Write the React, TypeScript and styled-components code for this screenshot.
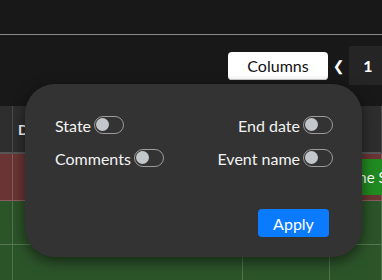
import React, { useState } from 'react'
import styled, { createGlobalStyle } from 'styled-components'

const GlobalStyle = createGlobalStyle`
  html, body {
    margin: 0;
    padding: 0;
    background: #181818;
    overflow: hidden;
    font-family: Lato, "Open Sans", sans-serif;
  }
`

const columns = [
  { key: 'state', label: 'State', side: 'left' },
  { key: 'endDate', label: 'End date', side: 'right' },
  { key: 'comments', label: 'Comments', side: 'left' },
  { key: 'eventName', label: 'Event name', side: 'right' },
]

const App = () => {
  // which columns are switched on
  const [shown, setShown] = useState<Record<string, boolean>>({})

  const flip = (key: string) => {
    setShown({ ...shown, [key]: !shown[key] })
  }

  return (
    <Page>
      <GlobalStyle />
      <TopBar />
      <Main>
        <Toolbar>
          <ColumnsButton>Columns</ColumnsButton>
          <Chevron>❮</Chevron>
          <PageBox>1</PageBox>
        </Toolbar>

        <Table>
          <HeadCell />
          <HeadCell>Date</HeadCell>
          <HeadCell />
          <HeadCell />

          <Cell tone="red" />
          <Cell tone="red" />
          <Cell tone="red" />
          <Cell tone="red">
            <Badge>Game Show</Badge>
          </Cell>

          <Cell tone="green" />
          <Cell tone="green" />
          <Cell tone="green" />
          <Cell tone="green" />

          <Cell tone="green" />
          <Cell tone="green" />
          <Cell tone="green" />
          <Cell tone="green" />
        </Table>

        {/* column chooser menu */}
        <Popup>
          <Options>
            {columns.map((c) => (
              <Option key={c.key} side={c.side}>
                {c.label}
                <Toggle on={!!shown[c.key]} onClick={() => flip(c.key)} />
              </Option>
            ))}
          </Options>
          <Footer>
            <ApplyButton>Apply</ApplyButton>
          </Footer>
        </Popup>
      </Main>
    </Page>
  )
}

export default App

const Page = styled.div`
  width: 382px;
  height: 280px;
  background: #181818;
  overflow: hidden;
`
const TopBar = styled.div`
  height: 34px;
  border-bottom: 1px solid #8a8a8a;
`
const Main = styled.div`
  position: relative;
`
const Toolbar = styled.div`
  display: flex;
  align-items: center;
  justify-content: flex-end;
  padding-top: 11px;
  margin-bottom: 21px;
  margin-right: -5px;
`
const ColumnsButton = styled.button`
  width: 100px;
  height: 28px;
  background: #ffffff;
  color: #111;
  border: none;
  border-radius: 4px;
  box-shadow: inset 0 -1px 0 #cfcfcf;
  font-family: Lato, sans-serif;
  font-size: 16px;
  padding: 0;
`
const Chevron = styled.span`
  width: 21px;
  text-align: center;
  color: #ffffff;
  font-family: "DejaVu Sans", sans-serif;
  font-size: 14px;
  font-weight: bold;
`
const PageBox = styled.div`
  width: 38px;
  height: 39px;
  background: #252525;
  color: #ffffff;
  font-weight: bold;
  font-size: 16px;
  display: flex;
  align-items: center;
  justify-content: center;
`
const Table = styled.div`
  display: grid;
  grid-template-columns: 13px 230px 87px 1fr;
  grid-template-rows: 48px 47px 44px 44px;
`
const HeadCell = styled.div`
  background: #2e2e2e;
  border-right: 1px solid #4a4a4a;
  border-bottom: 2px solid #555555;
  color: #ffffff;
  font-size: 14px;
  font-weight: bold;
  display: flex;
  align-items: center;
  padding-left: 5px;
  box-sizing: border-box;
`
const Cell = styled.div<{ tone: string }>`
  background: ${(p) => (p.tone === 'red' ? '#6b3434' : '#2c5429')};
  border-right: 1px solid rgba(255, 255, 255, 0.18);
  border-bottom: 1px solid rgba(255, 255, 255, 0.2);
  box-sizing: border-box;
  padding: 5px 0 5px 0;
  display: flex;
  min-width: 0;
`
const Badge = styled.div`
  flex: 1;
  background: #218a21;
  color: #ffffff;
  font-size: 15px;
  display: flex;
  align-items: center;
  padding-left: 6px;
  white-space: nowrap;
`
const Popup = styled.div`
  position: absolute;
  left: 25px;
  top: 49px;
  width: 337px;
  height: 173px;
  box-sizing: border-box;
  padding: 32px 29px 20px 30px;
  background: #333333;
  border-radius: 30px;
  box-shadow: 0 4px 14px rgba(0, 0, 0, 0.55);
  display: flex;
  flex-direction: column;
  justify-content: space-between;
`
const Options = styled.div`
  display: grid;
  grid-template-columns: 1fr 1fr;
  row-gap: 15px;
`
const Option = styled.label<{ side: string }>`
  justify-self: ${(p) => (p.side === 'left' ? 'start' : 'end')};
  display: flex;
  align-items: center;
  gap: 3px;
  height: 18px;
  color: #f2f2f2;
  font-size: 16px;
  cursor: pointer;
`
const Toggle = styled.span<{ on: boolean }>`
  position: relative;
  width: 30px;
  height: 18px;
  box-sizing: border-box;
  border: 1.5px solid #9c9c9c;
  border-radius: 9px;
  background: ${(p) => (p.on ? '#0a7bff' : 'transparent')};
  &::after {
    content: '';
    position: absolute;
    top: 1px;
    left: ${(p) => (p.on ? '13px' : '1px')};
    width: 13px;
    height: 13px;
    border-radius: 50%;
    background: #c3c6ca;
  }
`
const Footer = styled.div`
  display: flex;
  justify-content: flex-end;
  padding-right: 4px;
`
const ApplyButton = styled.button`
  width: 71px;
  height: 28px;
  background: #0a7bff;
  color: #ffffff;
  border: none;
  border-radius: 4px;
  font-family: Lato, sans-serif;
  font-size: 16px;
  padding: 0;
`
